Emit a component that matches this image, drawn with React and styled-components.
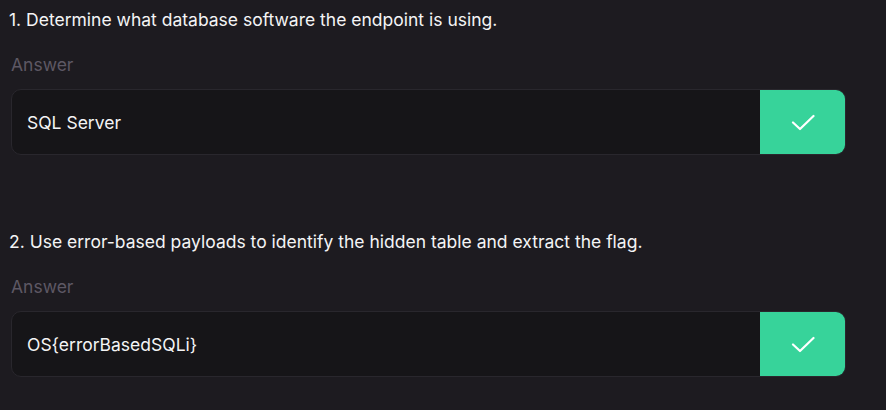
import React from 'react'
import styled, { createGlobalStyle } from 'styled-components';

const GlobalStyle = createGlobalStyle`
  body {
    margin: 0;
    background: #1d1b20;
    font-family: Inter, "Noto Sans", sans-serif;
  }
`;

const Page = styled.div`
  width: 886px;
  height: 410px;
  padding-top: 8px;
  box-sizing: border-box;
  display: flex;
  flex-direction: column;
  gap: 75px;
`;

const Question = styled.div`
  display: flex;
  flex-direction: column;
  padding-left: 11px;
  width: 835px;
`;

const Title = styled.h3`
  margin: 0 0 21px -2px;
  font-size: 17.5px;
  font-weight: 400;
  line-height: 24px;
  color: #f4f4f5;
`;

const Label = styled.label`
  font-size: 17.5px;
  line-height: 24px;
  color: #5d5864;
  margin-bottom: 12px;
`;

const Field = styled.div`
  display: flex;
  height: 66px;
  border: 1px solid #29272d;
  border-radius: 10px;
  background: #161518;
  box-sizing: border-box;
  overflow: hidden;
`;

const Input = styled.div`
  flex: 1;
  display: flex;
  align-items: center;
  padding-left: 15px;
  font-size: 17.5px;
  font-weight: 400;
  color: #f4f4f5;
`;

const Submit = styled.button`
  width: 86px;
  margin: -1px -1px -1px 0;
  border: none;
  background: #37d39a;
  display: flex;
  align-items: center;
  justify-content: center;
  cursor: pointer;
`;

const Check = () => (
  <svg width="24" height="17" viewBox="0 0 24 17" fill="none">
    <path d="M2 8.5 9 15 22.5 2" stroke="#fff" strokeWidth="2.2" strokeLinecap="round" strokeLinejoin="round" />
  </svg>
);

const questions = [
  { title: '1. Determine what database software the endpoint is using.', answer: 'SQL Server' },
  { title: '2. Use error-based payloads to identify the hidden table and extract the flag.', answer: 'OS{errorBasedSQLi}' },
];

const App = () => {
  return (
    <>
      <GlobalStyle />
      <Page>
        {questions.map((q) => (
          <Question key={q.title}>
            <Title>{q.title}</Title>
            <Label>Answer</Label>
            <Field>
              <Input>{q.answer}</Input>
              <Submit><Check /></Submit>
            </Field>
          </Question>
        ))}
      </Page>
    </>
  )
}

export default App
